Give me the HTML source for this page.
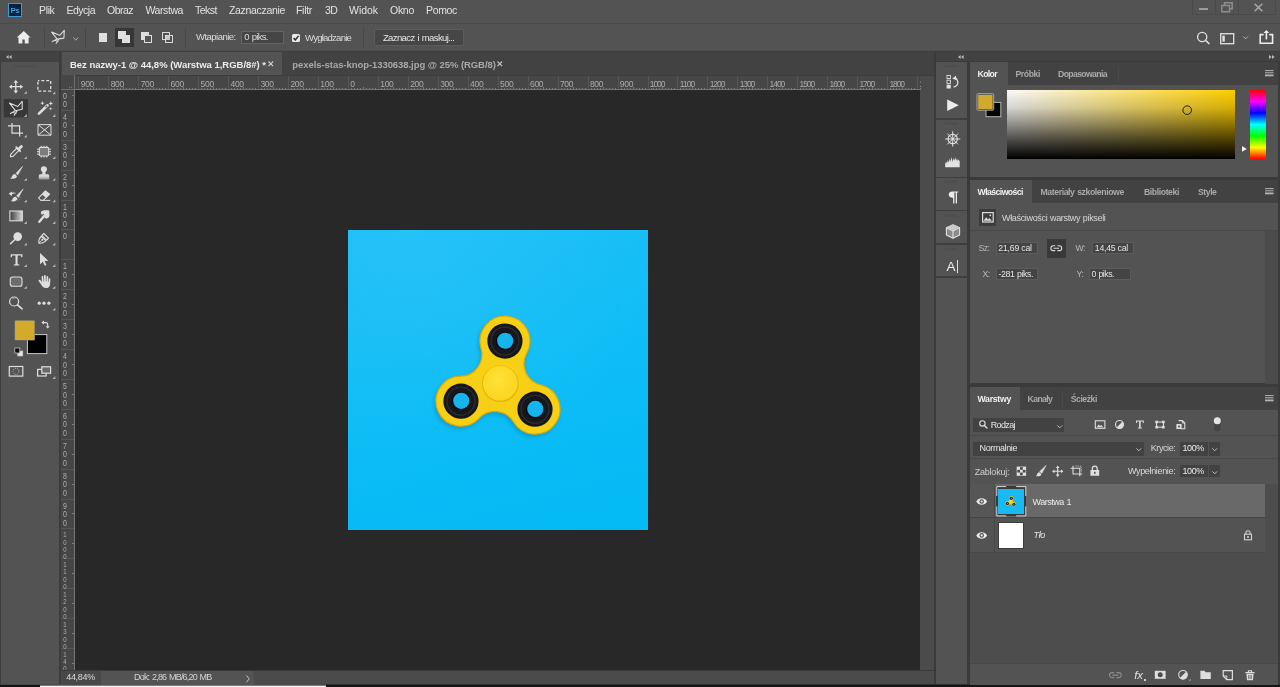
<!DOCTYPE html>
<html lang="pl">
<head>
<meta charset="utf-8">
<title>Photoshop</title>
<style>
*{box-sizing:border-box;margin:0;padding:0}
html,body{width:1280px;height:687px;overflow:hidden;background:#535353}
body{position:relative;font-family:"Liberation Sans",sans-serif;font-size:10px;color:#dadada}
.a{position:absolute}
.t{position:absolute;white-space:nowrap;color:#dcdcdc}
svg{position:absolute;overflow:visible}
</style>
</head>
<body>
<div id="app" style="position:absolute;left:0;top:0;width:1280px;height:687px;will-change:transform">
<!-- p10_layout -->
<div class="a" style="left:0px;top:0px;width:1280px;height:23px;background:#535353;"></div>
<div class="a" style="left:0px;top:23px;width:1280px;height:1px;background:#4a4a4a;"></div>
<div class="a" style="left:0px;top:24px;width:1280px;height:27px;background:#535353;"></div>
<div class="a" style="left:0px;top:50px;width:1280px;height:1px;background:#4d4d4d;"></div>
<div class="a" style="left:0px;top:51px;width:1280px;height:1px;background:#3f3f3f;"></div>
<div class="a" style="left:0px;top:52px;width:62px;height:633px;background:#3c3c3c;"></div>
<div class="a" style="left:0px;top:52px;width:59px;height:10px;background:#424242;"></div>
<div class="a" style="left:1px;top:62px;width:58px;height:623px;background:#535353;"></div>
<div class="a" style="left:61px;top:52px;width:873px;height:23.5px;background:#424242;"></div>
<div class="a" style="left:61.5px;top:52px;width:220.5px;height:23.5px;background:#535353;"></div>
<div class="a" style="left:61px;top:75px;width:859px;height:15px;background:#464646;"></div>
<div class="a" style="left:61px;top:75px;width:15px;height:595px;background:#464646;"></div>
<div class="a" style="left:62px;top:75px;width:872px;height:0.6px;background:#3c3c3c;"></div>
<div class="a" style="left:75px;top:90px;width:845px;height:580px;background:#282828;"></div>
<div class="a" style="left:920px;top:75.5px;width:14px;height:610px;background:#4b4b4b;"></div>
<div class="a" style="left:61px;top:670px;width:873px;height:15px;background:#4b4b4b;"></div>
<div class="a" style="left:62px;top:670px;width:872px;height:1px;background:#3a3a3a;"></div>
<div class="a" style="left:934px;top:52px;width:346px;height:633px;background:#3a3a3a;"></div>
<div class="a" style="left:936px;top:52px;width:344px;height:9.7px;background:#424242;"></div>
<div class="a" style="left:936px;top:61px;width:344px;height:1px;background:#3a3a3a;"></div>
<div class="a" style="left:936px;top:62px;width:31px;height:623px;background:#535353;"></div>
<div class="a" style="left:0px;top:684px;width:1280px;height:1px;background:#484848;"></div>
<div class="a" style="left:326px;top:684px;width:954px;height:1px;background:#2e2e2e;"></div>
<div class="a" style="left:0px;top:685px;width:1280px;height:2px;background:#141414;"></div>
<div class="a" style="left:40px;top:685px;width:286.3px;height:1px;background:#7d7d7d;"></div>
<div class="a" style="left:40px;top:686px;width:286.3px;height:1px;background:#f4f4f4;"></div>
<!-- p20_menubar -->
<div class="a" style="left:8px;top:3px;width:14px;height:14px;background:#06213a;border:1px solid #3b9bd2;border-radius:.5px"></div>
<div class="t" style="left:10.60px;top:6.00px;font-size:8px;line-height:10px;letter-spacing:-0.593px;font-weight:bold;color:#3a9fe6;">Ps</div>
<div class="t" style="left:39.00px;top:3.00px;font-size:10.5px;line-height:14px;letter-spacing:-0.355px;color:#e2e2e2;">Plik</div>
<div class="t" style="left:66.50px;top:3.00px;font-size:10.5px;line-height:14px;letter-spacing:-0.503px;color:#e2e2e2;">Edycja</div>
<div class="t" style="left:107.00px;top:3.00px;font-size:10.5px;line-height:14px;letter-spacing:-0.519px;color:#e2e2e2;">Obraz</div>
<div class="t" style="left:145.50px;top:3.00px;font-size:10.5px;line-height:14px;letter-spacing:-0.421px;color:#e2e2e2;">Warstwa</div>
<div class="t" style="left:195.00px;top:3.00px;font-size:10.5px;line-height:14px;letter-spacing:-0.501px;color:#e2e2e2;">Tekst</div>
<div class="t" style="left:229.00px;top:3.00px;font-size:10.5px;line-height:14px;letter-spacing:-0.321px;color:#e2e2e2;">Zaznaczanie</div>
<div class="t" style="left:296.00px;top:3.00px;font-size:10.5px;line-height:14px;letter-spacing:-0.299px;color:#e2e2e2;">Filtr</div>
<div class="t" style="left:325.00px;top:3.00px;font-size:10.5px;line-height:14px;letter-spacing:-0.711px;color:#e2e2e2;">3D</div>
<div class="t" style="left:349.00px;top:3.00px;font-size:10.5px;line-height:14px;letter-spacing:-0.035px;color:#e2e2e2;">Widok</div>
<div class="t" style="left:390.00px;top:3.00px;font-size:10.5px;line-height:14px;letter-spacing:-0.274px;color:#e2e2e2;">Okno</div>
<div class="t" style="left:426.00px;top:3.00px;font-size:10.5px;line-height:14px;letter-spacing:-0.336px;color:#e2e2e2;">Pomoc</div>
<div class="a" style="left:1192px;top:0px;width:84px;height:15px;border:1px solid #4a4a4a;border-top:none"></div>
<div class="a" style="left:1215px;top:0px;width:1px;height:15px;background:#4a4a4a;"></div>
<div class="a" style="left:1238px;top:0px;width:1px;height:15px;background:#4a4a4a;"></div>
<div class="a" style="left:1199px;top:8px;width:9px;height:2px;background:#9a9a9a;"></div>
<svg style="left:1221px;top:2px;" width="12" height="11" viewBox="0 0 12 11"><path d="M3.5 3.5V.8h7.7v5.9H8.5M.8 3.5h7.7v6.2H.8z" fill="none" stroke="#8d8d8d" stroke-width="1.5"/></svg>
<svg style="left:1254px;top:3px;" width="9" height="9" viewBox="0 0 9 9"><path d="M.7.7l7.6 7.6M8.3.7L.7 8.3" fill="none" stroke="#a8a8a8" stroke-width="1.5"/></svg>
<!-- p30_options -->
<svg style="left:16px;top:30px;" width="16" height="15" viewBox="0 0 16 15"><path d="M7.8 1L.8 7.6h1.7v5.9h3.9V9.5h2.3v4h3.9V7.6h1.9z" fill="#ececec"/></svg>
<div class="a" style="left:44px;top:28px;width:1px;height:20px;background:#474747;"></div>
<div class="a" style="left:85px;top:28px;width:1px;height:20px;background:#474747;"></div>
<div class="a" style="left:185px;top:28px;width:1px;height:20px;background:#474747;"></div>
<div class="a" style="left:363px;top:28px;width:1px;height:20px;background:#474747;"></div>
<svg style="left:49px;top:29px;" width="18" height="16" viewBox="0 0 18 16"><path d="M2.6 3.1L10.7 6.3L15.3 1.3L14.9 9.1L8.2 10.1Z M8.2 10.1L3.3 12.6 M9.6 10.8L7.2 14.3 M5.8 11.3 l3.2 1.2" fill="none" stroke="#dcdcdc" stroke-width="1.1" stroke-linejoin="round" stroke-linecap="round"/></svg>
<svg style="left:73px;top:36.7px;" width="6" height="4" viewBox="0 0 6 4"><path d="M.3.6L2.75 3L5.2.6" fill="none" stroke="#b8b8b8" stroke-width="1"/></svg>
<div class="a" style="left:98.5px;top:33px;width:8.6px;height:8.6px;background:#e0e0e0;"></div>
<div class="a" style="left:115px;top:28px;width:18.7px;height:19.4px;background:#363636;"></div>
<div class="a" style="left:118.1px;top:31px;width:8.3px;height:8.3px;background:#e0e0e0;"></div>
<div class="a" style="left:121.6px;top:34.5px;width:8.6px;height:8.6px;background:#e0e0e0;"></div>
<div class="a" style="left:140.7px;top:32px;width:8.3px;height:8.2px;background:#e0e0e0;"></div>
<div class="a" style="left:143.6px;top:35px;width:8.2px;height:8.2px;background:#555;border:1px solid #e0e0e0"></div>
<div class="a" style="left:161.8px;top:32px;width:8.4px;height:8.2px;border:1px solid #d8d8d8"></div>
<div class="a" style="left:165px;top:35px;width:8.2px;height:8.2px;border:1px solid #d8d8d8"></div>
<div class="a" style="left:165.5px;top:35.5px;width:4.4px;height:4.4px;background:#c8c8c8;"></div>
<div class="t" style="left:196.00px;top:31.00px;font-size:9.5px;line-height:12px;letter-spacing:-0.528px;">Wtapianie:</div>
<div class="a" style="left:240.5px;top:30.5px;width:43px;height:13px;background:#454545;border:1px solid #646464"></div>
<div class="t" style="left:244.30px;top:31.00px;font-size:9.5px;line-height:12px;word-spacing:0.950px;letter-spacing:-0.729px;">0 piks.</div>
<div class="a" style="left:292.3px;top:34.2px;width:8px;height:8px;background:#e8e8e8;border-radius:1.5px"></div>
<svg style="left:292.3px;top:34.2px;" width="8" height="8" viewBox="0 0 8 8"><path d="M1.6 4.1L3.4 5.9L6.5 1.9" fill="none" stroke="#2a2a2a" stroke-width="1.5"/></svg>
<div class="t" style="left:305.00px;top:32.00px;font-size:9.5px;line-height:12px;letter-spacing:-0.746px;">Wygładzanie</div>
<div class="a" style="left:373.8px;top:28.7px;width:90.6px;height:17.3px;background:#464646;border:1px solid #5c5c5c;border-radius:1px"></div>
<div class="t" style="left:382.90px;top:32.00px;font-size:9.5px;line-height:12px;word-spacing:0.825px;letter-spacing:-0.603px;color:#e6e6e6;">Zaznacz i maskuj...</div>
<svg style="left:1196px;top:31px;" width="14" height="14" viewBox="0 0 14 14"><circle cx="6.2" cy="6" r="4.6" fill="none" stroke="#e2e2e2" stroke-width="1.3"/><path d="M9.5 9.3L13 12.6" stroke="#e2e2e2" stroke-width="1.5" stroke-linecap="round"/></svg>
<svg style="left:1220px;top:32.5px;" width="14.5" height="11.5" viewBox="0 0 14.5 11.5"><rect x=".7" y=".7" width="13" height="10" fill="none" stroke="#e2e2e2" stroke-width="1.3"/><rect x="2.4" y="2.6" width="2.4" height="6" fill="#e2e2e2"/></svg>
<svg style="left:1243px;top:36.4px;" width="6" height="4" viewBox="0 0 6 4"><path d="M.3.5L2.6 2.8L4.9.5" fill="none" stroke="#b8b8b8" stroke-width="1"/></svg>
<svg style="left:1258.5px;top:29px;" width="15" height="15.5" viewBox="0 0 15 15.5"><path d="M4.6 5.6H1.2v8.6h12.4V5.6H10.2" fill="none" stroke="#ececec" stroke-width="1.6"/><path d="M7.4 10.4V2.2" stroke="#ececec" stroke-width="1.6"/><path d="M4.6 3.9L7.4.9L10.2 3.9z" fill="#ececec"/></svg>
<svg style="left:6px;top:54.5px;" width="6" height="4" viewBox="0 0 6 4"><path d="M2.6 0L0 2L2.6 4zM5.6 0L3 2L5.6 4z" fill="#bdbdbd"/></svg>
<svg style="left:958px;top:54.5px;" width="6" height="4" viewBox="0 0 6 4"><path d="M2.6 0L0 2L2.6 4zM5.6 0L3 2L5.6 4z" fill="#bdbdbd"/></svg>
<svg style="left:1268.5px;top:54.5px;" width="6" height="4" viewBox="0 0 6 4"><path d="M0 0L2.6 2L0 4zM3 0L5.6 2L3 4z" fill="#bdbdbd"/></svg>
<!-- p40_doc -->
<div class="t" style="left:70.00px;top:59.00px;font-size:9.5px;line-height:12px;letter-spacing:-0.022px;font-weight:bold;color:#ececec;">Bez nazwy-1 @ 44,8% (Warstwa 1,RGB/8#) *</div>
<svg style="left:268px;top:61px;" width="6" height="6" viewBox="0 0 6 6"><path d="M.5.5l4.6 4.6M5.1.5L.5 5.1" fill="none" stroke="#d0d0d0" stroke-width="1.1"/></svg>
<div class="t" style="left:292.30px;top:59.00px;font-size:9.5px;line-height:12px;letter-spacing:-0.064px;font-weight:bold;color:#a9a9a9;">pexels-stas-knop-1330638.jpg @ 25% (RGB/8)</div>
<svg style="left:497.3px;top:61px;" width="6" height="6" viewBox="0 0 6 6"><path d="M.5.5l4.6 4.6M5.1.5L.5 5.1" fill="none" stroke="#c4c4c4" stroke-width="1.1"/></svg>
<div class="a" style="left:75px;top:75px;width:846px;height:15px;overflow:hidden"><svg style="left:0;top:0" width="846" height="15" shape-rendering="crispEdges"><path d="M3.95 15v-14M33.90 15v-14M63.85 15v-14M93.80 15v-14M123.75 15v-14M153.70 15v-14M183.65 15v-14M213.60 15v-14M243.55 15v-14M273.50 15v-14M303.45 15v-14M333.40 15v-14M363.35 15v-14M393.30 15v-14M423.25 15v-14M453.20 15v-14M483.15 15v-14M513.10 15v-14M543.05 15v-14M573.00 15v-14M602.95 15v-14M632.90 15v-14M662.85 15v-14M692.80 15v-14M722.75 15v-14M752.70 15v-14M782.65 15v-14M812.60 15v-14M842.55 15v-14" stroke="#565656" stroke-width="1" fill="none"/><path d="M6.95 14.5v-1.4M9.94 14.5v-1.4M12.94 14.5v-1.4M15.93 14.5v-1.4M18.93 14.5v-2.6M21.92 14.5v-1.4M24.92 14.5v-1.4M27.91 14.5v-1.4M30.91 14.5v-1.4M36.90 14.5v-1.4M39.89 14.5v-1.4M42.88 14.5v-1.4M45.88 14.5v-1.4M48.88 14.5v-2.6M51.87 14.5v-1.4M54.87 14.5v-1.4M57.86 14.5v-1.4M60.86 14.5v-1.4M66.85 14.5v-1.4M69.84 14.5v-1.4M72.84 14.5v-1.4M75.83 14.5v-1.4M78.82 14.5v-2.6M81.82 14.5v-1.4M84.81 14.5v-1.4M87.81 14.5v-1.4M90.81 14.5v-1.4M96.80 14.5v-1.4M99.79 14.5v-1.4M102.79 14.5v-1.4M105.78 14.5v-1.4M108.78 14.5v-2.6M111.77 14.5v-1.4M114.77 14.5v-1.4M117.76 14.5v-1.4M120.75 14.5v-1.4M126.75 14.5v-1.4M129.74 14.5v-1.4M132.74 14.5v-1.4M135.73 14.5v-1.4M138.72 14.5v-2.6M141.72 14.5v-1.4M144.72 14.5v-1.4M147.71 14.5v-1.4M150.70 14.5v-1.4M156.69 14.5v-1.4M159.69 14.5v-1.4M162.69 14.5v-1.4M165.68 14.5v-1.4M168.68 14.5v-2.6M171.67 14.5v-1.4M174.66 14.5v-1.4M177.66 14.5v-1.4M180.66 14.5v-1.4M186.64 14.5v-1.4M189.64 14.5v-1.4M192.63 14.5v-1.4M195.63 14.5v-1.4M198.62 14.5v-2.6M201.62 14.5v-1.4M204.62 14.5v-1.4M207.61 14.5v-1.4M210.61 14.5v-1.4M216.60 14.5v-1.4M219.59 14.5v-1.4M222.58 14.5v-1.4M225.58 14.5v-1.4M228.57 14.5v-2.6M231.57 14.5v-1.4M234.56 14.5v-1.4M237.56 14.5v-1.4M240.56 14.5v-1.4M246.55 14.5v-1.4M249.54 14.5v-1.4M252.54 14.5v-1.4M255.53 14.5v-1.4M258.52 14.5v-2.6M261.52 14.5v-1.4M264.51 14.5v-1.4M267.51 14.5v-1.4M270.50 14.5v-1.4M276.50 14.5v-1.4M279.49 14.5v-1.4M282.49 14.5v-1.4M285.48 14.5v-1.4M288.48 14.5v-2.6M291.47 14.5v-1.4M294.46 14.5v-1.4M297.46 14.5v-1.4M300.45 14.5v-1.4M306.44 14.5v-1.4M309.44 14.5v-1.4M312.44 14.5v-1.4M315.43 14.5v-1.4M318.43 14.5v-2.6M321.42 14.5v-1.4M324.42 14.5v-1.4M327.41 14.5v-1.4M330.40 14.5v-1.4M336.39 14.5v-1.4M339.39 14.5v-1.4M342.38 14.5v-1.4M345.38 14.5v-1.4M348.38 14.5v-2.6M351.37 14.5v-1.4M354.37 14.5v-1.4M357.36 14.5v-1.4M360.36 14.5v-1.4M366.35 14.5v-1.4M369.34 14.5v-1.4M372.34 14.5v-1.4M375.33 14.5v-1.4M378.32 14.5v-2.6M381.32 14.5v-1.4M384.31 14.5v-1.4M387.31 14.5v-1.4M390.31 14.5v-1.4M396.30 14.5v-1.4M399.29 14.5v-1.4M402.28 14.5v-1.4M405.28 14.5v-1.4M408.27 14.5v-2.6M411.27 14.5v-1.4M414.26 14.5v-1.4M417.26 14.5v-1.4M420.25 14.5v-1.4M426.25 14.5v-1.4M429.24 14.5v-1.4M432.24 14.5v-1.4M435.23 14.5v-1.4M438.23 14.5v-2.6M441.22 14.5v-1.4M444.21 14.5v-1.4M447.21 14.5v-1.4M450.20 14.5v-1.4M456.19 14.5v-1.4M459.19 14.5v-1.4M462.18 14.5v-1.4M465.18 14.5v-1.4M468.17 14.5v-2.6M471.17 14.5v-1.4M474.16 14.5v-1.4M477.16 14.5v-1.4M480.15 14.5v-1.4M486.14 14.5v-1.4M489.14 14.5v-1.4M492.13 14.5v-1.4M495.13 14.5v-1.4M498.12 14.5v-2.6M501.12 14.5v-1.4M504.12 14.5v-1.4M507.11 14.5v-1.4M510.11 14.5v-1.4M516.10 14.5v-1.4M519.09 14.5v-1.4M522.09 14.5v-1.4M525.08 14.5v-1.4M528.08 14.5v-2.6M531.07 14.5v-1.4M534.07 14.5v-1.4M537.06 14.5v-1.4M540.05 14.5v-1.4M546.04 14.5v-1.4M549.04 14.5v-1.4M552.03 14.5v-1.4M555.03 14.5v-1.4M558.02 14.5v-2.6M561.02 14.5v-1.4M564.01 14.5v-1.4M567.01 14.5v-1.4M570.00 14.5v-1.4M576.00 14.5v-1.4M578.99 14.5v-1.4M581.99 14.5v-1.4M584.98 14.5v-1.4M587.98 14.5v-2.6M590.97 14.5v-1.4M593.97 14.5v-1.4M596.96 14.5v-1.4M599.95 14.5v-1.4M605.94 14.5v-1.4M608.94 14.5v-1.4M611.93 14.5v-1.4M614.93 14.5v-1.4M617.92 14.5v-2.6M620.92 14.5v-1.4M623.91 14.5v-1.4M626.91 14.5v-1.4M629.90 14.5v-1.4M635.89 14.5v-1.4M638.89 14.5v-1.4M641.88 14.5v-1.4M644.88 14.5v-1.4M647.88 14.5v-2.6M650.87 14.5v-1.4M653.87 14.5v-1.4M656.86 14.5v-1.4M659.86 14.5v-1.4M665.85 14.5v-1.4M668.84 14.5v-1.4M671.84 14.5v-1.4M674.83 14.5v-1.4M677.83 14.5v-2.6M680.82 14.5v-1.4M683.81 14.5v-1.4M686.81 14.5v-1.4M689.81 14.5v-1.4M695.79 14.5v-1.4M698.79 14.5v-1.4M701.78 14.5v-1.4M704.78 14.5v-1.4M707.77 14.5v-2.6M710.77 14.5v-1.4M713.76 14.5v-1.4M716.76 14.5v-1.4M719.75 14.5v-1.4M725.75 14.5v-1.4M728.74 14.5v-1.4M731.73 14.5v-1.4M734.73 14.5v-1.4M737.73 14.5v-2.6M740.72 14.5v-1.4M743.71 14.5v-1.4M746.71 14.5v-1.4M749.71 14.5v-1.4M755.69 14.5v-1.4M758.69 14.5v-1.4M761.68 14.5v-1.4M764.68 14.5v-1.4M767.67 14.5v-2.6M770.67 14.5v-1.4M773.66 14.5v-1.4M776.66 14.5v-1.4M779.65 14.5v-1.4M785.64 14.5v-1.4M788.64 14.5v-1.4M791.63 14.5v-1.4M794.63 14.5v-1.4M797.62 14.5v-2.6M800.62 14.5v-1.4M803.62 14.5v-1.4M806.61 14.5v-1.4M809.61 14.5v-1.4M815.60 14.5v-1.4M818.59 14.5v-1.4M821.58 14.5v-1.4M824.58 14.5v-1.4M827.58 14.5v-2.6M830.57 14.5v-1.4M833.56 14.5v-1.4M836.56 14.5v-1.4M839.56 14.5v-1.4M845.54 14.5v-1.4" stroke="#7a7a7a" stroke-width="1" fill="none"/><path d="M0 14.5h846" stroke="#767676" stroke-width="1"/></svg><div class="t" style="left:5.75px;top:4.00px;font-size:8.5px;line-height:11px;letter-spacing:-0.294px;color:#adadad;">900</div>
<div class="t" style="left:35.70px;top:4.00px;font-size:8.5px;line-height:11px;letter-spacing:-0.294px;color:#adadad;">800</div>
<div class="t" style="left:65.65px;top:4.00px;font-size:8.5px;line-height:11px;letter-spacing:-0.294px;color:#adadad;">700</div>
<div class="t" style="left:95.60px;top:4.00px;font-size:8.5px;line-height:11px;letter-spacing:-0.294px;color:#adadad;">600</div>
<div class="t" style="left:125.55px;top:4.00px;font-size:8.5px;line-height:11px;letter-spacing:-0.294px;color:#adadad;">500</div>
<div class="t" style="left:155.50px;top:4.00px;font-size:8.5px;line-height:11px;letter-spacing:-0.294px;color:#adadad;">400</div>
<div class="t" style="left:185.45px;top:4.00px;font-size:8.5px;line-height:11px;letter-spacing:-0.294px;color:#adadad;">300</div>
<div class="t" style="left:215.40px;top:4.00px;font-size:8.5px;line-height:11px;letter-spacing:-0.294px;color:#adadad;">200</div>
<div class="t" style="left:245.35px;top:4.00px;font-size:8.5px;line-height:11px;letter-spacing:-0.294px;color:#adadad;">100</div>
<div class="t" style="left:275.30px;top:4.00px;font-size:8.5px;line-height:11px;letter-spacing:-0.828px;color:#adadad;">0</div>
<div class="t" style="left:305.25px;top:4.00px;font-size:8.5px;line-height:11px;letter-spacing:-0.294px;color:#adadad;">100</div>
<div class="t" style="left:335.20px;top:4.00px;font-size:8.5px;line-height:11px;letter-spacing:-0.294px;color:#adadad;">200</div>
<div class="t" style="left:365.15px;top:4.00px;font-size:8.5px;line-height:11px;letter-spacing:-0.294px;color:#adadad;">300</div>
<div class="t" style="left:395.10px;top:4.00px;font-size:8.5px;line-height:11px;letter-spacing:-0.294px;color:#adadad;">400</div>
<div class="t" style="left:425.05px;top:4.00px;font-size:8.5px;line-height:11px;letter-spacing:-0.294px;color:#adadad;">500</div>
<div class="t" style="left:455.00px;top:4.00px;font-size:8.5px;line-height:11px;letter-spacing:-0.294px;color:#adadad;">600</div>
<div class="t" style="left:484.95px;top:4.00px;font-size:8.5px;line-height:11px;letter-spacing:-0.294px;color:#adadad;">700</div>
<div class="t" style="left:514.90px;top:4.00px;font-size:8.5px;line-height:11px;letter-spacing:-0.294px;color:#adadad;">800</div>
<div class="t" style="left:544.85px;top:4.00px;font-size:8.5px;line-height:11px;letter-spacing:-0.294px;color:#adadad;">900</div>
<div class="t" style="left:574.80px;top:4.00px;font-size:8.5px;line-height:11px;letter-spacing:-1.078px;color:#adadad;">1000</div>
<div class="t" style="left:604.75px;top:4.00px;font-size:8.5px;line-height:11px;letter-spacing:-0.920px;color:#adadad;">1100</div>
<div class="t" style="left:634.70px;top:4.00px;font-size:8.5px;line-height:11px;letter-spacing:-1.078px;color:#adadad;">1200</div>
<div class="t" style="left:664.65px;top:4.00px;font-size:8.5px;line-height:11px;letter-spacing:-1.078px;color:#adadad;">1300</div>
<div class="t" style="left:694.60px;top:4.00px;font-size:8.5px;line-height:11px;letter-spacing:-1.078px;color:#adadad;">1400</div>
<div class="t" style="left:724.55px;top:4.00px;font-size:8.5px;line-height:11px;letter-spacing:-1.078px;color:#adadad;">1500</div>
<div class="t" style="left:754.50px;top:4.00px;font-size:8.5px;line-height:11px;letter-spacing:-1.078px;color:#adadad;">1600</div>
<div class="t" style="left:784.45px;top:4.00px;font-size:8.5px;line-height:11px;letter-spacing:-1.078px;color:#adadad;">1700</div>
<div class="t" style="left:814.40px;top:4.00px;font-size:8.5px;line-height:11px;letter-spacing:-1.078px;color:#adadad;">1800</div>
<div class="t" style="left:844.35px;top:4.00px;font-size:8.5px;line-height:11px;letter-spacing:-1.078px;color:#adadad;">1900</div>
</div>
<div class="a" style="left:61px;top:90px;width:14px;height:580px;overflow:hidden"><svg style="left:0;top:0" width="14" height="580" shape-rendering="crispEdges"><path d="M14 20.30h-14M14 50.20h-14M14 80.10h-14M14 110.00h-14M14 139.90h-14M14 169.80h-14M14 199.70h-14M14 229.60h-14M14 259.50h-14M14 289.40h-14M14 319.30h-14M14 349.20h-14M14 379.10h-14M14 409.00h-14M14 438.90h-14M14 468.80h-14M14 498.70h-14M14 528.60h-14M14 558.50h-14" stroke="#565656" stroke-width="1" fill="none"/><path d="M14 2.36h-1.4M14 5.35h-2.6M14 8.34h-1.4M14 11.33h-1.4M14 14.32h-1.4M14 17.31h-1.4M14 23.29h-1.4M14 26.28h-1.4M14 29.27h-1.4M14 32.26h-1.4M14 35.25h-2.6M14 38.24h-1.4M14 41.23h-1.4M14 44.22h-1.4M14 47.21h-1.4M14 53.19h-1.4M14 56.18h-1.4M14 59.17h-1.4M14 62.16h-1.4M14 65.15h-2.6M14 68.14h-1.4M14 71.13h-1.4M14 74.12h-1.4M14 77.11h-1.4M14 83.09h-1.4M14 86.08h-1.4M14 89.07h-1.4M14 92.06h-1.4M14 95.05h-2.6M14 98.04h-1.4M14 101.03h-1.4M14 104.02h-1.4M14 107.01h-1.4M14 112.99h-1.4M14 115.98h-1.4M14 118.97h-1.4M14 121.96h-1.4M14 124.95h-2.6M14 127.94h-1.4M14 130.93h-1.4M14 133.92h-1.4M14 136.91h-1.4M14 142.89h-1.4M14 145.88h-1.4M14 148.87h-1.4M14 151.86h-1.4M14 154.85h-2.6M14 157.84h-1.4M14 160.83h-1.4M14 163.82h-1.4M14 166.81h-1.4M14 172.79h-1.4M14 175.78h-1.4M14 178.77h-1.4M14 181.76h-1.4M14 184.75h-2.6M14 187.74h-1.4M14 190.73h-1.4M14 193.72h-1.4M14 196.71h-1.4M14 202.69h-1.4M14 205.68h-1.4M14 208.67h-1.4M14 211.66h-1.4M14 214.65h-2.6M14 217.64h-1.4M14 220.63h-1.4M14 223.62h-1.4M14 226.61h-1.4M14 232.59h-1.4M14 235.58h-1.4M14 238.57h-1.4M14 241.56h-1.4M14 244.55h-2.6M14 247.54h-1.4M14 250.53h-1.4M14 253.52h-1.4M14 256.51h-1.4M14 262.49h-1.4M14 265.48h-1.4M14 268.47h-1.4M14 271.46h-1.4M14 274.45h-2.6M14 277.44h-1.4M14 280.43h-1.4M14 283.42h-1.4M14 286.41h-1.4M14 292.39h-1.4M14 295.38h-1.4M14 298.37h-1.4M14 301.36h-1.4M14 304.35h-2.6M14 307.34h-1.4M14 310.33h-1.4M14 313.32h-1.4M14 316.31h-1.4M14 322.29h-1.4M14 325.28h-1.4M14 328.27h-1.4M14 331.26h-1.4M14 334.25h-2.6M14 337.24h-1.4M14 340.23h-1.4M14 343.22h-1.4M14 346.21h-1.4M14 352.19h-1.4M14 355.18h-1.4M14 358.17h-1.4M14 361.16h-1.4M14 364.15h-2.6M14 367.14h-1.4M14 370.13h-1.4M14 373.12h-1.4M14 376.11h-1.4M14 382.09h-1.4M14 385.08h-1.4M14 388.07h-1.4M14 391.06h-1.4M14 394.05h-2.6M14 397.04h-1.4M14 400.03h-1.4M14 403.02h-1.4M14 406.01h-1.4M14 411.99h-1.4M14 414.98h-1.4M14 417.97h-1.4M14 420.96h-1.4M14 423.95h-2.6M14 426.94h-1.4M14 429.93h-1.4M14 432.92h-1.4M14 435.91h-1.4M14 441.89h-1.4M14 444.88h-1.4M14 447.87h-1.4M14 450.86h-1.4M14 453.85h-2.6M14 456.84h-1.4M14 459.83h-1.4M14 462.82h-1.4M14 465.81h-1.4M14 471.79h-1.4M14 474.78h-1.4M14 477.77h-1.4M14 480.76h-1.4M14 483.75h-2.6M14 486.74h-1.4M14 489.73h-1.4M14 492.72h-1.4M14 495.71h-1.4M14 501.69h-1.4M14 504.68h-1.4M14 507.67h-1.4M14 510.66h-1.4M14 513.65h-2.6M14 516.64h-1.4M14 519.63h-1.4M14 522.62h-1.4M14 525.61h-1.4M14 531.59h-1.4M14 534.58h-1.4M14 537.57h-1.4M14 540.56h-1.4M14 543.55h-2.6M14 546.54h-1.4M14 549.53h-1.4M14 552.52h-1.4M14 555.51h-1.4M14 561.49h-1.4M14 564.48h-1.4M14 567.47h-1.4M14 570.46h-1.4M14 573.45h-2.6M14 576.44h-1.4M14 579.43h-1.4" stroke="#7a7a7a" stroke-width="1" fill="none"/><path d="M13.5 0v580" stroke="#767676" stroke-width="1"/></svg><div class="t" style="left:0.60px;top:-8.00px;font-size:8.3px;line-height:11px;color:#adadad;width:6px;text-align:center;transform:scaleX(.84);">5</div>
<div class="t" style="left:0.60px;top:1.00px;font-size:8.3px;line-height:11px;color:#adadad;width:6px;text-align:center;transform:scaleX(.84);">0</div>
<div class="t" style="left:0.60px;top:9.00px;font-size:8.3px;line-height:11px;color:#adadad;width:6px;text-align:center;transform:scaleX(.84);">0</div>
<div class="t" style="left:0.60px;top:22.00px;font-size:8.3px;line-height:11px;color:#adadad;width:6px;text-align:center;transform:scaleX(.84);">4</div>
<div class="t" style="left:0.60px;top:30.00px;font-size:8.3px;line-height:11px;color:#adadad;width:6px;text-align:center;transform:scaleX(.84);">0</div>
<div class="t" style="left:0.60px;top:39.00px;font-size:8.3px;line-height:11px;color:#adadad;width:6px;text-align:center;transform:scaleX(.84);">0</div>
<div class="t" style="left:0.60px;top:52.00px;font-size:8.3px;line-height:11px;color:#adadad;width:6px;text-align:center;transform:scaleX(.84);">3</div>
<div class="t" style="left:0.60px;top:60.00px;font-size:8.3px;line-height:11px;color:#adadad;width:6px;text-align:center;transform:scaleX(.84);">0</div>
<div class="t" style="left:0.60px;top:69.00px;font-size:8.3px;line-height:11px;color:#adadad;width:6px;text-align:center;transform:scaleX(.84);">0</div>
<div class="t" style="left:0.60px;top:82.00px;font-size:8.3px;line-height:11px;color:#adadad;width:6px;text-align:center;transform:scaleX(.84);">2</div>
<div class="t" style="left:0.60px;top:90.00px;font-size:8.3px;line-height:11px;color:#adadad;width:6px;text-align:center;transform:scaleX(.84);">0</div>
<div class="t" style="left:0.60px;top:99.00px;font-size:8.3px;line-height:11px;color:#adadad;width:6px;text-align:center;transform:scaleX(.84);">0</div>
<div class="t" style="left:0.60px;top:112.00px;font-size:8.3px;line-height:11px;color:#adadad;width:6px;text-align:center;transform:scaleX(.84);">1</div>
<div class="t" style="left:0.60px;top:120.00px;font-size:8.3px;line-height:11px;color:#adadad;width:6px;text-align:center;transform:scaleX(.84);">0</div>
<div class="t" style="left:0.60px;top:129.00px;font-size:8.3px;line-height:11px;color:#adadad;width:6px;text-align:center;transform:scaleX(.84);">0</div>
<div class="t" style="left:0.60px;top:141.00px;font-size:8.3px;line-height:11px;color:#adadad;width:6px;text-align:center;transform:scaleX(.84);">0</div>
<div class="t" style="left:0.60px;top:171.00px;font-size:8.3px;line-height:11px;color:#adadad;width:6px;text-align:center;transform:scaleX(.84);">1</div>
<div class="t" style="left:0.60px;top:180.00px;font-size:8.3px;line-height:11px;color:#adadad;width:6px;text-align:center;transform:scaleX(.84);">0</div>
<div class="t" style="left:0.60px;top:189.00px;font-size:8.3px;line-height:11px;color:#adadad;width:6px;text-align:center;transform:scaleX(.84);">0</div>
<div class="t" style="left:0.60px;top:201.00px;font-size:8.3px;line-height:11px;color:#adadad;width:6px;text-align:center;transform:scaleX(.84);">2</div>
<div class="t" style="left:0.60px;top:210.00px;font-size:8.3px;line-height:11px;color:#adadad;width:6px;text-align:center;transform:scaleX(.84);">0</div>
<div class="t" style="left:0.60px;top:218.00px;font-size:8.3px;line-height:11px;color:#adadad;width:6px;text-align:center;transform:scaleX(.84);">0</div>
<div class="t" style="left:0.60px;top:231.00px;font-size:8.3px;line-height:11px;color:#adadad;width:6px;text-align:center;transform:scaleX(.84);">3</div>
<div class="t" style="left:0.60px;top:240.00px;font-size:8.3px;line-height:11px;color:#adadad;width:6px;text-align:center;transform:scaleX(.84);">0</div>
<div class="t" style="left:0.60px;top:248.00px;font-size:8.3px;line-height:11px;color:#adadad;width:6px;text-align:center;transform:scaleX(.84);">0</div>
<div class="t" style="left:0.60px;top:261.00px;font-size:8.3px;line-height:11px;color:#adadad;width:6px;text-align:center;transform:scaleX(.84);">4</div>
<div class="t" style="left:0.60px;top:270.00px;font-size:8.3px;line-height:11px;color:#adadad;width:6px;text-align:center;transform:scaleX(.84);">0</div>
<div class="t" style="left:0.60px;top:278.00px;font-size:8.3px;line-height:11px;color:#adadad;width:6px;text-align:center;transform:scaleX(.84);">0</div>
<div class="t" style="left:0.60px;top:291.00px;font-size:8.3px;line-height:11px;color:#adadad;width:6px;text-align:center;transform:scaleX(.84);">5</div>
<div class="t" style="left:0.60px;top:300.00px;font-size:8.3px;line-height:11px;color:#adadad;width:6px;text-align:center;transform:scaleX(.84);">0</div>
<div class="t" style="left:0.60px;top:308.00px;font-size:8.3px;line-height:11px;color:#adadad;width:6px;text-align:center;transform:scaleX(.84);">0</div>
<div class="t" style="left:0.60px;top:321.00px;font-size:8.3px;line-height:11px;color:#adadad;width:6px;text-align:center;transform:scaleX(.84);">6</div>
<div class="t" style="left:0.60px;top:329.00px;font-size:8.3px;line-height:11px;color:#adadad;width:6px;text-align:center;transform:scaleX(.84);">0</div>
<div class="t" style="left:0.60px;top:338.00px;font-size:8.3px;line-height:11px;color:#adadad;width:6px;text-align:center;transform:scaleX(.84);">0</div>
<div class="t" style="left:0.60px;top:351.00px;font-size:8.3px;line-height:11px;color:#adadad;width:6px;text-align:center;transform:scaleX(.84);">7</div>
<div class="t" style="left:0.60px;top:359.00px;font-size:8.3px;line-height:11px;color:#adadad;width:6px;text-align:center;transform:scaleX(.84);">0</div>
<div class="t" style="left:0.60px;top:368.00px;font-size:8.3px;line-height:11px;color:#adadad;width:6px;text-align:center;transform:scaleX(.84);">0</div>
<div class="t" style="left:0.60px;top:381.00px;font-size:8.3px;line-height:11px;color:#adadad;width:6px;text-align:center;transform:scaleX(.84);">8</div>
<div class="t" style="left:0.60px;top:389.00px;font-size:8.3px;line-height:11px;color:#adadad;width:6px;text-align:center;transform:scaleX(.84);">0</div>
<div class="t" style="left:0.60px;top:398.00px;font-size:8.3px;line-height:11px;color:#adadad;width:6px;text-align:center;transform:scaleX(.84);">0</div>
<div class="t" style="left:0.60px;top:411.00px;font-size:8.3px;line-height:11px;color:#adadad;width:6px;text-align:center;transform:scaleX(.84);">9</div>
<div class="t" style="left:0.60px;top:419.00px;font-size:8.3px;line-height:11px;color:#adadad;width:6px;text-align:center;transform:scaleX(.84);">0</div>
<div class="t" style="left:0.60px;top:428.00px;font-size:8.3px;line-height:11px;color:#adadad;width:6px;text-align:center;transform:scaleX(.84);">0</div>
<div class="t" style="left:0.60px;top:440.00px;font-size:7.2px;line-height:9px;color:#adadad;width:6px;text-align:center;transform:scaleX(.84);">1</div>
<div class="t" style="left:0.60px;top:448.00px;font-size:7.2px;line-height:9px;color:#adadad;width:6px;text-align:center;transform:scaleX(.84);">0</div>
<div class="t" style="left:0.60px;top:455.00px;font-size:7.2px;line-height:9px;color:#adadad;width:6px;text-align:center;transform:scaleX(.84);">0</div>
<div class="t" style="left:0.60px;top:462.00px;font-size:7.2px;line-height:9px;color:#adadad;width:6px;text-align:center;transform:scaleX(.84);">0</div>
<div class="t" style="left:0.60px;top:470.00px;font-size:7.2px;line-height:9px;color:#adadad;width:6px;text-align:center;transform:scaleX(.84);">1</div>
<div class="t" style="left:0.60px;top:477.00px;font-size:7.2px;line-height:9px;color:#adadad;width:6px;text-align:center;transform:scaleX(.84);">1</div>
<div class="t" style="left:0.60px;top:485.00px;font-size:7.2px;line-height:9px;color:#adadad;width:6px;text-align:center;transform:scaleX(.84);">0</div>
<div class="t" style="left:0.60px;top:492.00px;font-size:7.2px;line-height:9px;color:#adadad;width:6px;text-align:center;transform:scaleX(.84);">0</div>
<div class="t" style="left:0.60px;top:500.00px;font-size:7.2px;line-height:9px;color:#adadad;width:6px;text-align:center;transform:scaleX(.84);">1</div>
<div class="t" style="left:0.60px;top:507.00px;font-size:7.2px;line-height:9px;color:#adadad;width:6px;text-align:center;transform:scaleX(.84);">2</div>
<div class="t" style="left:0.60px;top:515.00px;font-size:7.2px;line-height:9px;color:#adadad;width:6px;text-align:center;transform:scaleX(.84);">0</div>
<div class="t" style="left:0.60px;top:522.00px;font-size:7.2px;line-height:9px;color:#adadad;width:6px;text-align:center;transform:scaleX(.84);">0</div>
<div class="t" style="left:0.60px;top:530.00px;font-size:7.2px;line-height:9px;color:#adadad;width:6px;text-align:center;transform:scaleX(.84);">1</div>
<div class="t" style="left:0.60px;top:537.00px;font-size:7.2px;line-height:9px;color:#adadad;width:6px;text-align:center;transform:scaleX(.84);">3</div>
<div class="t" style="left:0.60px;top:545.00px;font-size:7.2px;line-height:9px;color:#adadad;width:6px;text-align:center;transform:scaleX(.84);">0</div>
<div class="t" style="left:0.60px;top:552.00px;font-size:7.2px;line-height:9px;color:#adadad;width:6px;text-align:center;transform:scaleX(.84);">0</div>
<div class="t" style="left:0.60px;top:560.00px;font-size:7.2px;line-height:9px;color:#adadad;width:6px;text-align:center;transform:scaleX(.84);">1</div>
<div class="t" style="left:0.60px;top:567.00px;font-size:7.2px;line-height:9px;color:#adadad;width:6px;text-align:center;transform:scaleX(.84);">4</div>
<div class="t" style="left:0.60px;top:574.00px;font-size:7.2px;line-height:9px;color:#adadad;width:6px;text-align:center;transform:scaleX(.84);">0</div>
<div class="t" style="left:0.60px;top:582.00px;font-size:7.2px;line-height:9px;color:#adadad;width:6px;text-align:center;transform:scaleX(.84);">0</div>
</div>
<div class="a" style="left:61px;top:75px;width:14px;height:15px;background:#464646;"></div>
<svg style="left:61px;top:75px;" width="14" height="15" viewBox="0 0 14 15"><path d="M0 14.5h14M13.5 0v15" stroke="#6e6e6e" stroke-width="1" fill="none" shape-rendering="crispEdges"/><path d="M8.200 12.200h.9M10.200 12.200h.9" stroke="#9a9a9a" stroke-width=".9"/></svg>
<div class="a" style="left:62px;top:671px;width:39px;height:14px;background:#484848;"></div>
<div class="a" style="left:101px;top:671px;width:153px;height:14px;background:#535353;"></div>
<div class="t" style="left:66.20px;top:671.00px;font-size:9px;line-height:12px;letter-spacing:-0.288px;color:#dddddd;">44,84%</div>
<div class="t" style="left:134.00px;top:671.00px;font-size:9px;line-height:12px;word-spacing:1.044px;letter-spacing:-0.809px;color:#d4d4d4;">Dok: 2,86 MB/6,20 MB</div>
<svg style="left:246px;top:675px;" width="4" height="8" viewBox="0 0 4 8"><path d="M.5.5L3.2 3.8L.5 7.2" fill="none" stroke="#c4c4c4" stroke-width="1"/></svg>
<!-- p45_canvas -->
<div class="a" style="left:347.7px;top:229.8px;width:300.2px;height:300.5px;background:radial-gradient(ellipse 75% 65% at 25% 12%,rgba(56,198,248,.3) 0%,rgba(64,200,248,0) 100%),linear-gradient(165deg,#1fbff7 0%,#10bdf6 45%,#03baf5 100%);"></div>
<svg style="left:347.7px;top:229.8px;" width="300.2" height="300.5" viewBox="347.7 229.8 300.2 300.5"><defs><radialGradient id="sh" cx=".45" cy=".4" r=".7"><stop offset="0" stop-color="#ffe135"/><stop offset=".8" stop-color="#fbd622"/><stop offset="1" stop-color="#e9bd0c"/></radialGradient><filter id="sf" x="-20%" y="-20%" width="140%" height="140%"><feGaussianBlur stdDeviation="2.2"/></filter></defs><path d="M480.70 348.03A25 25 0 1 1 526.49 353.00A21.7 21.7 0 0 0 540.46 384.67A25 25 0 1 1 513.25 421.84A21.7 21.7 0 0 0 478.85 418.10A25 25 0 1 1 460.26 375.96A21.7 21.7 0 0 0 480.70 348.03Z" fill="#0a6fa0" opacity=".45" filter="url(#sf)" transform="translate(-1.5 2.5)"/><path d="M480.70 348.03A25 25 0 1 1 526.49 353.00A21.7 21.7 0 0 0 540.46 384.67A25 25 0 1 1 513.25 421.84A21.7 21.7 0 0 0 478.85 418.10A25 25 0 1 1 460.26 375.96A21.7 21.7 0 0 0 480.70 348.03Z" fill="#f7cf14" stroke="#d9a90a" stroke-width="1.2"/><circle cx="504.64" cy="340.85" r="17.6" fill="#17161b"/><circle cx="504.64" cy="340.85" r="14" fill="none" stroke="#2b2a30" stroke-width="1.5"/><circle cx="504.64" cy="340.85" r="9.2" fill="#0b0b0e"/><circle cx="504.94" cy="340.55" r="8.1" fill="#16b4ec"/><circle cx="534.70" cy="409.00" r="17.6" fill="#17161b"/><circle cx="534.70" cy="409.00" r="14" fill="none" stroke="#2b2a30" stroke-width="1.5"/><circle cx="534.70" cy="409.00" r="9.2" fill="#0b0b0e"/><circle cx="535.00" cy="408.70" r="8.1" fill="#16b4ec"/><circle cx="460.66" cy="400.95" r="17.6" fill="#17161b"/><circle cx="460.66" cy="400.95" r="14" fill="none" stroke="#2b2a30" stroke-width="1.5"/><circle cx="460.66" cy="400.95" r="9.2" fill="#0b0b0e"/><circle cx="460.96" cy="400.65" r="8.1" fill="#16b4ec"/><circle cx="500.0" cy="383.6" r="18.3" fill="#e3b408"/><circle cx="500.0" cy="383.20000000000005" r="17.4" fill="url(#sh)"/></svg>
<!-- p50_tools -->
<svg style="left:0;top:0" width="62" height="400" viewBox="0 0 62 400"><path d="M14 66h22" stroke="#4a4a4a" stroke-width="2.600" stroke-dasharray="1 1.2"/><path d="M15.8 81v11.6M10 86.7h12.4" stroke="#dedede" stroke-width="1.3" fill="none"/><path d="M15.8 79.9l2.3 2.9h-4.6zM15.8 93.5l2.3-2.9h-4.6zM9 86.7l2.9-2.3v4.6zM23 86.7l-2.9-2.3v4.6z" fill="#dedede"/><path d="M26.8 90.9v2.800h-2.800z" fill="#b9b9b9"/><rect x="37.9" y="80.6" width="12.8" height="10.6" fill="none" stroke="#dedede" stroke-width="1.3" stroke-dasharray="3 1.9" stroke-dashoffset="1.5"/><path d="M55.3 91.5v2.800h-2.800z" fill="#b9b9b9"/><rect x="3.8" y="99" width="24.2" height="18.4" fill="#383838"/><path d="M9.5 103.1L17.7 106.5L22.2 101.3L22.2 109.3L15.4 110.7Z M15.4 110.7L10.4 113.4 M16.9 111.2L14.2 115.3 M12.6 112.2l3.5 1.2" fill="none" stroke="#dedede" stroke-width="1.1" stroke-linejoin="round" stroke-linecap="round"/><path d="M26.8 114.10000000000001v2.800h-2.800z" fill="#b9b9b9"/><path d="M38.9 113.6L47.6 105.3" stroke="#dedede" stroke-width="2.6" stroke-linecap="round"/><path d="M45.6 107.2l1.6-1.5" stroke="#666" stroke-width="1.2"/><path d="M42.4 101.10000000000001L42.988 102.61200000000001L44.5 103.2L42.988 103.788L42.4 105.3L41.812 103.788L40.3 103.2L41.812 102.61200000000001Z" fill="#dedede"/><path d="M50.8 101.10000000000001L51.443999999999996 102.756L53.099999999999994 103.4L51.443999999999996 104.04400000000001L50.8 105.7L50.156 104.04400000000001L48.5 103.4L50.156 102.756Z" fill="#dedede"/><path d="M50.6 107.2L51.048 108.352L52.2 108.8L51.048 109.24799999999999L50.6 110.39999999999999L50.152 109.24799999999999L49.0 108.8L50.152 108.352Z" fill="#dedede"/><path d="M55.3 114.10000000000001v2.800h-2.800z" fill="#b9b9b9"/><path d="M12 123v10.2h11M8 125.8h11.6v10.8" fill="none" stroke="#dedede" stroke-width="1.200"/><path d="M26.8 134.7v2.800h-2.800z" fill="#b9b9b9"/><path d="M38 124.6h13v10.6h-13zM38 124.6l13 10.6M51 124.6l-13 10.6" fill="none" stroke="#dedede" stroke-width="1"/><path d="M10.4 156.6L10.8 154.2L17 148L19.2 150.2L13 156.4Z" fill="none" stroke="#dedede" stroke-width="1.1" stroke-linejoin="round"/><path d="M16.2 147.2l4 4" stroke="#dedede" stroke-width="1.8" stroke-linecap="round"/><path d="M18.6 149.2L21.4 146.4" stroke="#dedede" stroke-width="2.8" stroke-linecap="round"/><path d="M26.8 156.2v2.800h-2.800z" fill="#b9b9b9"/><rect x="39.3" y="147.4" width="9.4" height="8.6" rx="1.6" fill="#7d7d7d" stroke="#dedede" stroke-width="1.1"/><path d="M41.2 145.8v1.6M44 145.8v1.6M46.8 145.8v1.6M41.2 156v1.6M44 156v1.6M46.8 156v1.6M37 149.2h2.3M37 151.7h2.3M37 154.2h2.3M48.7 149.2h2.3M48.7 151.7h2.3M48.7 154.2h2.3" stroke="#dedede" stroke-width="1"/><path d="M55.3 156.2v2.800h-2.800z" fill="#b9b9b9"/><g transform="translate(0 0)"><path d="M22.600 166.300L16 173.200L17.800 175Z" fill="#dedede" stroke="#dedede" stroke-width=".5" stroke-linejoin="round"/><path d="M15.100 174.100L16.900 175.900C17 177.400 15.700 178.300 14.200 178.600C12.800 178.900 11.400 178.800 10.200 178.500C11.500 177.900 11.600 176.900 12.200 175.900C12.800 174.800 13.900 174 15.100 174.100Z" fill="#dedede"/></g><path d="M26.8 177.89999999999998v2.800h-2.800z" fill="#b9b9b9"/><circle cx="43.9" cy="169.2" r="3" fill="#dedede"/><path d="M42.6 171h2.6l.5 3.6h-3.600z" fill="#dedede"/><defs><linearGradient id="stg" x1="0" y1="0" x2="0" y2="1"><stop offset="0" stop-color="#e6e6e6"/><stop offset=".45" stop-color="#d0d0d0"/><stop offset="1" stop-color="#8a8a8a"/></linearGradient></defs><path d="M38.800 175.800c0-1 .8-1.600 1.800-1.600h6.800c1 0 1.800.6 1.800 1.600v3.800h-10.400z" fill="url(#stg)"/><path d="M55.3 177.89999999999998v2.800h-2.800z" fill="#b9b9b9"/><g transform="translate(0.6 22.6)"><path d="M22.600 166.300L16 173.200L17.800 175Z" fill="#dedede" stroke="#dedede" stroke-width=".5" stroke-linejoin="round"/><path d="M15.100 174.100L16.900 175.900C17 177.400 15.700 178.300 14.200 178.600C12.800 178.900 11.400 178.800 10.200 178.500C11.500 177.900 11.600 176.900 12.200 175.900C12.800 174.800 13.900 174 15.100 174.100Z" fill="#dedede"/></g><path d="M8.600 193.800l3.400-2.400v1.500c1.600-.5 3.100-.4 4.300.3c-1.500-.1-2.900.3-4.300 1v1.700z" fill="#dedede"/><path d="M19.8 196.500c.8 1.600.2 3.300-1.300 4.500" stroke="#9a9a9a" stroke-width=".8" fill="none" stroke-dasharray="1.200 1"/><path d="M26.8 199.5v2.800h-2.800z" fill="#b9b9b9"/><path d="M38.600 197.800L45.400 190.900L49.600 194.200L43.200 200.300H40.800Z" fill="none" stroke="#dedede" stroke-width="1.1" stroke-linejoin="round"/><path d="M41.900 194.500L45.400 190.900L49.600 194.200L45.900 197.700Z" fill="#dedede"/><path d="M40.800 200.400h9.400" stroke="#dedede" stroke-width="1"/><path d="M55.3 199.5v2.800h-2.800z" fill="#b9b9b9"/><defs><linearGradient id="grd" x1="0" y1="0" x2="1" y2="0"><stop offset="0" stop-color="#3a3a3a"/><stop offset="1" stop-color="#d8d8d8"/></linearGradient></defs><rect x="9.900" y="211" width="12.400" height="9.800" fill="url(#grd)" stroke="#dedede" stroke-width="1.100"/><path d="M26.8 221.1v2.800h-2.800z" fill="#b9b9b9"/><path d="M39.300 221.800L44.800 215.300" stroke="#dedede" stroke-width="2.400" stroke-linecap="round"/><path d="M41.200 211.400c1.600-1.200 5.200-1.600 8-.8l.3 5.200c-.3 1.800-2.100 3.100-3.900 2.600l-1.300-1.300l1.400-1.700l-2-1.700l-1.700 1.100c-.9-.9-1.400-2.400-.8-3.400z" fill="#dedede"/><path d="M55.3 221.1v2.800h-2.800z" fill="#b9b9b9"/><circle cx="17.700" cy="236.600" r="4.300" fill="#dedede"/><path d="M14.600 239.700L10.500 243.800" stroke="#dedede" stroke-width="1.500" stroke-linecap="round"/><path d="M26.8 242.7v2.800h-2.800z" fill="#b9b9b9"/><path d="M38.9 243.1Q42.4 243.8 45.8 240.8L41.2 236.2Q38.2 239.600 38.9 243.1Z" fill="none" stroke="#dedede" stroke-width="1.100" stroke-linejoin="round"/><path d="M39.1 242.900l2.600-2.600" stroke="#dedede" stroke-width=".9"/><circle cx="42.300" cy="239.700" r="1" fill="#dedede"/><path d="M46.600 240.1L41.900 235.400L43.800 233.500L48.500 238.200Z" fill="none" stroke="#dedede" stroke-width="1.100" stroke-linejoin="round"/><path d="M55.3 242.7v2.800h-2.800z" fill="#b9b9b9"/><path d="M10.700 254.200h11.700v3h-1l-.5-1.800h-3.300v8.800l1.700.4v.9h-5.500v-.9l1.700-.4v-8.800h-3.300l-.5 1.800h-1z" fill="#dedede"/><path d="M26.8 264.3v2.800h-2.800z" fill="#b9b9b9"/><path d="M40 253v11.300l2.900-2.500l1.800 4l1.700-.8l-1.800-3.900l3.700-.3z" fill="#dedede"/><path d="M55.3 264.3v2.800h-2.800z" fill="#b9b9b9"/><rect x="10.300" y="277" width="11.700" height="9.300" rx="2.300" fill="#6c6c6c" stroke="#dedede" stroke-width="1.100"/><path d="M26.8 286.0v2.800h-2.800z" fill="#b9b9b9"/><path d="M41.500 281.200c-.6-.8-1.700-1.900-2.600-1.400c-.8.500-.2 1.400.4 2.200l2.800 4.100c.9 1.300 2 2 3.700 2c2.700 0 4.200-1.700 4.300-4.200l.2-4.700c0-.6-.3-1-.8-1s-.8.400-.8 1l-.1 2.600h-.5l.1-4.800c0-.6-.3-1-.8-1s-.9.400-.9 1l-.1 4.600h-.5l-.2-5.500c0-.6-.4-1-.9-1s-.8.400-.8 1l.1 5.500h-.5l-.3-4.500c0-.6-.4-1-.9-1s-.8.400-.8 1l.4 6.800z" fill="#dedede"/><path d="M55.3 286.0v2.800h-2.800z" fill="#b9b9b9"/><circle cx="14.100" cy="301.500" r="4.500" fill="none" stroke="#dedede" stroke-width="1.200"/><path d="M12 299.600c.8-1 2.200-1.500 3.500-1.100" stroke="#9a9a9a" stroke-width=".8" fill="none"/><path d="M17.500 304.900L22 308.900" stroke="#dedede" stroke-width="1.700" stroke-linecap="round"/><circle cx="39.200" cy="303.200" r="1.600" fill="#dedede"/><circle cx="44" cy="303.200" r="1.600" fill="#dedede"/><circle cx="48.900" cy="303.200" r="1.600" fill="#dedede"/><path d="M55.3 307.7v2.800h-2.800z" fill="#b9b9b9"/><rect x="27.400" y="334.600" width="19.400" height="19" fill="#000" stroke="#c9c9c9" stroke-width="1"/><rect x="14.500" y="320.200" width="20.400" height="20.400" rx="1" fill="#7a7a7a"/><rect x="15.100" y="320.800" width="19.300" height="19.300" rx=".6" fill="#d3aa2c"/><path d="M43.700 322.600h2.200c1.200 0 1.800.6 1.800 1.800v2" fill="none" stroke="#dedede" stroke-width="1.100"/><path d="M41.400 322.600l2.500-2v4zM47.700 328.600l-2-2.400h4z" fill="#dedede"/><rect x="17.800" y="351" width="5" height="5" fill="#e6e6e6" stroke="#c0c0c0" stroke-width=".6"/><rect x="14.800" y="348" width="5" height="5" fill="#0a0a0a" stroke="#c0c0c0" stroke-width=".8"/><rect x="9.300" y="366.500" width="13.500" height="9.600" fill="none" stroke="#dedede" stroke-width="1.200"/><circle cx="16" cy="371.300" r="3" fill="none" stroke="#bdbdbd" stroke-width=".9" stroke-dasharray="1.100 1"/><rect x="37.600" y="369.400" width="8.600" height="6.600" fill="none" stroke="#dedede" stroke-width="1.200"/><rect x="41.800" y="366.800" width="8.800" height="6.400" fill="#6a6a6a" stroke="#dedede" stroke-width="1.200"/><path d="M55.3 376.2v2.800h-2.800z" fill="#b9b9b9"/></svg>
<!-- p60_dock -->
<div class="a" style="left:936px;top:118px;width:31px;height:1.6px;background:#3e3e3e;"></div>
<div class="a" style="left:936px;top:176.5px;width:31px;height:1.6px;background:#3e3e3e;"></div>
<div class="a" style="left:936px;top:209.8px;width:31px;height:1.6px;background:#3e3e3e;"></div>
<div class="a" style="left:936px;top:243px;width:31px;height:1.6px;background:#3e3e3e;"></div>
<div class="a" style="left:936px;top:276px;width:31px;height:1.6px;background:#3e3e3e;"></div>
<svg style="left:0;top:0" width="1280" height="300" viewBox="0 0 1280 300"><path d="M945 66h13" stroke="#494949" stroke-width="2.6" stroke-dasharray="1 1.2"/><path d="M945 123.6h13" stroke="#494949" stroke-width="2.6" stroke-dasharray="1 1.2"/><path d="M945 181.7h13" stroke="#494949" stroke-width="2.6" stroke-dasharray="1 1.2"/><path d="M945 215.8h13" stroke="#494949" stroke-width="2.6" stroke-dasharray="1 1.2"/><path d="M945 249h13" stroke="#494949" stroke-width="2.6" stroke-dasharray="1 1.2"/><rect x="947" y="75.400" width="3.400" height="3.200" fill="none" stroke="#e2e2e2" stroke-width=".9"/><rect x="947" y="80.200" width="3.400" height="3.200" fill="none" stroke="#e2e2e2" stroke-width=".9"/><rect x="946.600" y="84.700" width="4.200" height="3.800" fill="#e2e2e2"/><path d="M953.600 87.200c3.400-.8 4.800-3.300 4.100-5.900c-.5-1.800-1.500-3-2.900-3.600" fill="none" stroke="#e2e2e2" stroke-width="1.300"/><path d="M952.200 78.600l3.800-2.800l.4 4.400z" fill="#e2e2e2"/><path d="M947.200 99.600l11.600 5.700l-11.600 5.700z" fill="#ececec"/><circle cx="952.700" cy="139" r="4.600" fill="none" stroke="#e2e2e2" stroke-width="1.200"/><circle cx="952.700" cy="139" r="1.500" fill="#e2e2e2"/><path d="M954.20 139.00L960.30 139.00M953.76 140.06L958.07 144.37M952.70 140.50L952.70 146.60M951.64 140.06L947.33 144.37M951.20 139.00L945.10 139.00M951.64 137.94L947.33 133.63M952.70 137.50L952.70 131.40M953.76 137.94L958.07 133.63" stroke="#e2e2e2" stroke-width="1" fill="none"/><path d="M945.200 167.200v-3.600l.9-1.600l.8 1.200l.9-3l.9 2.200l.9-4l1 3.400l.9-5l1 5.200l.9-3.800l.9 2.600l.9-3.600l.9 3.400l.9-2.200l.9 2.600l.9-1.400l.9 2v5.600z" fill="#e2e2e2"/><path d="M952.400 191.400h5.800v1.200h-1.200v10.900h-1.300v-10.900h-1.300v10.900h-1.300v-5.600c-2.600 0-4.400-1.300-4.400-3.300c0-2 1.700-3.200 3.700-3.200z" fill="#ececec"/><path d="M953 224.700l6.600 3v7.200l-6.600 3.400l-6.600-3.400v-7.200z" fill="#8a8a8a" stroke="#e2e2e2" stroke-width="1.100" stroke-linejoin="round"/><path d="M946.400 227.700l6.600 3.100l6.600-3.100M953 230.800v7.500" fill="none" stroke="#e2e2e2" stroke-width="1.100"/><path d="M953 224.700l6.600 3l-6.600 3.100l-6.600-3.100z" fill="#c9c9c9"/></svg>
<div class="t" style="left:946.60px;top:258.00px;font-size:13.5px;line-height:18px;color:#ececec;">A</div>
<div class="a" style="left:957.2px;top:259.6px;width:1.2px;height:13px;background:#e0e0e0;"></div>
<!-- p70_panels -->
<div class="a" style="left:969.7px;top:61.75px;width:308.29999999999995px;height:114.75px;background:#535353;"></div>
<div class="a" style="left:969.7px;top:61.75px;width:308.29999999999995px;height:23.3px;background:#424242;"></div>
<div class="a" style="left:969.7px;top:61.75px;width:38px;height:23.5px;background:#535353;"></div>
<div class="t" style="left:977.50px;top:69.00px;font-size:8.7px;line-height:11px;letter-spacing:-0.642px;font-weight:bold;color:#f0f0f0;">Kolor</div>
<div class="t" style="left:1015.50px;top:69.00px;font-size:8.7px;line-height:11px;letter-spacing:-0.428px;font-weight:bold;color:#a9a9a9;">Próbki</div>
<div class="t" style="left:1058.00px;top:69.00px;font-size:8.7px;line-height:11px;letter-spacing:-0.643px;font-weight:bold;color:#a9a9a9;">Dopasowania</div>
<svg style="left:1265px;top:70.05px;" width="9" height="7" viewBox="0 0 9 7"><path d="M0 .6h8.600M0 2.800h8.600" stroke="#b4b4b4" stroke-width="1"/><path d="M0 5.400h8.600" stroke="#b4b4b4" stroke-width="1.800"/></svg>
<div class="a" style="left:1118px;top:66px;width:1px;height:16px;background:#4a4a4a;"></div>
<svg style="left:970px;top:88px;" width="40" height="34" viewBox="970 88 40 34"><rect x="986" y="102.400" width="14.800" height="14.300" fill="#040404" stroke="#b4b4b4" stroke-width="1"/><rect x="977" y="93.700" width="16.700" height="16.500" rx=".8" fill="#4a4a4a" stroke="#a8a8a8" stroke-width="1"/><rect x="978.200" y="94.900" width="14.300" height="14.100" fill="#d1aa2d"/></svg>
<div class="a" style="left:1006.7px;top:90px;width:228.8px;height:69.2px;background:linear-gradient(to bottom,rgba(0,0,0,0) 0%,rgba(0,0,0,.15) 25%,rgba(0,0,0,.43) 50%,rgba(0,0,0,.73) 75%,#000 100%),linear-gradient(to right,#fbfbfb 0%,#fdcd00 100%);"></div>
<svg style="left:1181.5px;top:104.7px;" width="10.4" height="10.4" viewBox="0 0 10.4 10.4"><circle cx="5.200" cy="5.200" r="4.300" fill="none" stroke="#1c1c1c" stroke-width="1"/></svg>
<div class="a" style="left:1249.5px;top:90px;width:16.5px;height:69.2px;background:linear-gradient(to bottom,#ff0000 0%,#ff00ff 16.600%,#0000ff 33.300%,#00ffff 50%,#00ff00 66.600%,#ffff00 83.300%,#ff0000 100%);"></div>
<svg style="left:1242px;top:146.2px;" width="5" height="6" viewBox="0 0 5 6"><path d="M0 0L4.800 2.900L0 5.800z" fill="#f4f4f4"/></svg>
<div class="a" style="left:969.7px;top:179.6px;width:308.29999999999995px;height:203.9px;background:#535353;"></div>
<div class="a" style="left:969.7px;top:179.6px;width:308.29999999999995px;height:23.3px;background:#424242;"></div>
<div class="a" style="left:969.7px;top:179.6px;width:62.5px;height:23.5px;background:#535353;"></div>
<div class="t" style="left:977.50px;top:187.00px;font-size:8.7px;line-height:11px;letter-spacing:-0.566px;font-weight:bold;color:#f0f0f0;">Właściwości</div>
<div class="t" style="left:1040.50px;top:187.00px;font-size:8.7px;line-height:11px;word-spacing:0.600px;letter-spacing:-0.403px;font-weight:bold;color:#a9a9a9;">Materiały szkoleniowe</div>
<div class="t" style="left:1144.00px;top:187.00px;font-size:8.7px;line-height:11px;letter-spacing:-0.415px;font-weight:bold;color:#a9a9a9;">Biblioteki</div>
<div class="t" style="left:1198.00px;top:187.00px;font-size:8.7px;line-height:11px;letter-spacing:-0.458px;font-weight:bold;color:#a9a9a9;">Style</div>
<svg style="left:1265px;top:187.9px;" width="9" height="7" viewBox="0 0 9 7"><path d="M0 .6h8.600M0 2.800h8.600" stroke="#b4b4b4" stroke-width="1"/><path d="M0 5.400h8.600" stroke="#b4b4b4" stroke-width="1.800"/></svg>
<div class="a" style="left:969.7px;top:229.5px;width:308.29999999999995px;height:1px;background:#484848;"></div>
<div class="a" style="left:1265px;top:230.5px;width:13px;height:153px;background:#4b4b4b;"></div>
<div class="a" style="left:979px;top:209px;width:17.3px;height:16.6px;background:#3c3c3c;"></div>
<svg style="left:981.8px;top:212px;" width="12" height="11" viewBox="0 0 12 11"><rect x=".6" y=".6" width="10.600" height="9.400" fill="none" stroke="#dedede" stroke-width="1.200"/><path d="M1.600 8.800l2.600-3.600l1.800 2.200l1.300-1.400l2.600 2.800z" fill="#dedede"/><circle cx="8.300" cy="3.300" r=".9" fill="#dedede"/></svg>
<div class="t" style="left:1002.00px;top:212.00px;font-size:9px;line-height:12px;word-spacing:0.476px;letter-spacing:-0.332px;color:#d6d6d6;">Właściwości warstwy pikseli</div>
<div class="t" style="left:978.60px;top:243.00px;font-size:8.7px;line-height:11px;letter-spacing:-0.623px;color:#b9b9b9;">Sz:</div>
<div class="a" style="left:995.5px;top:242px;width:42.5px;height:12px;background:#444444;border:1px solid #5c5c5c"></div>
<div class="t" style="left:998.30px;top:243.00px;font-size:8.7px;line-height:11px;letter-spacing:-0.201px;color:#e4e4e4;">21,69 cal</div>
<div class="a" style="left:1047px;top:239px;width:18.9px;height:19.3px;background:#393939;"></div>
<svg style="left:1049.7px;top:245px;" width="13" height="7" viewBox="0 0 13 7"><path d="M5.200.8H3.300a2.400 2.400 0 000 4.800h1.900M7.400.8h1.900a2.400 2.400 0 010 4.800H7.400M3.600 3.200h5.400" fill="none" stroke="#dcdcdc" stroke-width="1.100"/></svg>
<div class="t" style="left:1075.60px;top:243.00px;font-size:8.7px;line-height:11px;letter-spacing:-0.585px;color:#b9b9b9;">W:</div>
<div class="a" style="left:1091.5px;top:242px;width:42.3px;height:12px;background:#444444;border:1px solid #5c5c5c"></div>
<div class="t" style="left:1094.80px;top:243.00px;font-size:8.7px;line-height:11px;letter-spacing:-0.234px;color:#e4e4e4;">14,45 cal</div>
<div class="t" style="left:982.60px;top:269.00px;font-size:8.7px;line-height:11px;letter-spacing:-0.660px;color:#b9b9b9;">X:</div>
<div class="a" style="left:995.5px;top:268px;width:42.5px;height:12px;background:#444444;border:1px solid #5c5c5c"></div>
<div class="t" style="left:998.60px;top:269.00px;font-size:8.7px;line-height:11px;word-spacing:0.530px;letter-spacing:-0.384px;color:#e4e4e4;">-281 piks.</div>
<div class="t" style="left:1076.50px;top:269.00px;font-size:8.7px;line-height:11px;letter-spacing:-0.370px;color:#b9b9b9;">Y:</div>
<div class="a" style="left:1088.9px;top:268px;width:41.8px;height:12px;background:#444444;border:1px solid #5c5c5c"></div>
<div class="t" style="left:1091.50px;top:269.00px;font-size:8.7px;line-height:11px;word-spacing:0.604px;letter-spacing:-0.464px;color:#e4e4e4;">0 piks.</div>
<!-- p80_layers -->
<div class="a" style="left:969.7px;top:386.5px;width:308.29999999999995px;height:298.5px;background:#535353;"></div>
<div class="a" style="left:969.7px;top:386.5px;width:308.29999999999995px;height:23.3px;background:#424242;"></div>
<div class="a" style="left:969.7px;top:386.5px;width:50.2px;height:23.5px;background:#535353;"></div>
<div class="t" style="left:977.50px;top:394.00px;font-size:8.7px;line-height:11px;letter-spacing:-0.279px;font-weight:bold;color:#f0f0f0;">Warstwy</div>
<div class="t" style="left:1027.60px;top:394.00px;font-size:8.7px;line-height:11px;letter-spacing:-0.654px;font-weight:bold;color:#a9a9a9;">Kanały</div>
<div class="t" style="left:1070.70px;top:394.00px;font-size:8.7px;line-height:11px;letter-spacing:-0.457px;font-weight:bold;color:#a9a9a9;">Ścieżki</div>
<svg style="left:1265px;top:394.8px;" width="9" height="7" viewBox="0 0 9 7"><path d="M0 .6h8.600M0 2.800h8.600" stroke="#b4b4b4" stroke-width="1"/><path d="M0 5.400h8.600" stroke="#b4b4b4" stroke-width="1.800"/></svg>
<div class="a" style="left:1062px;top:390.5px;width:1px;height:16px;background:#4a4a4a;"></div>
<div class="a" style="left:973.2px;top:418.1px;width:91px;height:13.8px;background:#424242;border-radius:1px"></div>
<svg style="left:978.8px;top:420.3px;" width="9" height="9" viewBox="0 0 9 9"><circle cx="3.400" cy="3.400" r="2.700" fill="none" stroke="#dedede" stroke-width="1.100"/><path d="M5.400 5.400L8 8" stroke="#dedede" stroke-width="1.400" stroke-linecap="round"/></svg>
<div class="t" style="left:990.70px;top:419.00px;font-size:9px;line-height:12px;letter-spacing:-0.620px;color:#e6e6e6;">Rodzaj</div>
<svg style="left:1057px;top:425px;" width="6" height="4" viewBox="0 0 6 4"><path d="M.3.400L2.700 2.800L5.100.400" fill="none" stroke="#c4c4c4" stroke-width="1"/></svg>
<div class="a" style="left:969.7px;top:435.3px;width:308.29999999999995px;height:1px;background:#484848;"></div>
<div class="a" style="left:973.2px;top:442.2px;width:170.6px;height:13.4px;background:#424242;border-radius:1px"></div>
<div class="t" style="left:979.60px;top:442.00px;font-size:9px;line-height:12px;letter-spacing:-0.402px;color:#e6e6e6;">Normalnie</div>
<svg style="left:1136px;top:448px;" width="6" height="4" viewBox="0 0 6 4"><path d="M.3.400L2.700 2.800L5.100.400" fill="none" stroke="#c4c4c4" stroke-width="1"/></svg>
<div class="t" style="left:1150.70px;top:442.00px;font-size:9px;line-height:12px;letter-spacing:-0.401px;color:#d8d8d8;">Krycie:</div>
<div class="a" style="left:1180px;top:442.2px;width:28px;height:13.4px;background:#424242;"></div>
<div class="t" style="left:1182.50px;top:442.00px;font-size:9px;line-height:12px;letter-spacing:-0.430px;color:#ececec;">100%</div>
<div class="a" style="left:1209.1px;top:442.2px;width:11.4px;height:13.4px;background:#424242;"></div>
<svg style="left:1212px;top:448.4px;" width="6" height="4" viewBox="0 0 6 4"><path d="M.3.400L2.700 2.800L5.100.400" fill="none" stroke="#c4c4c4" stroke-width="1"/></svg>
<div class="a" style="left:969.7px;top:458px;width:308.29999999999995px;height:1px;background:#484848;"></div>
<div class="t" style="left:974.70px;top:466.00px;font-size:9px;line-height:12px;letter-spacing:-0.214px;color:#d0d0d0;">Zablokuj:</div>
<div class="t" style="left:1127.90px;top:465.00px;font-size:9px;line-height:12px;letter-spacing:-0.329px;color:#d8d8d8;">Wypełnienie:</div>
<div class="a" style="left:1180px;top:464.8px;width:28px;height:12.4px;background:#424242;"></div>
<div class="t" style="left:1182.50px;top:465.00px;font-size:9px;line-height:12px;letter-spacing:-0.430px;color:#ececec;">100%</div>
<div class="a" style="left:1209.1px;top:464.8px;width:11.4px;height:12.4px;background:#424242;"></div>
<svg style="left:1212px;top:471px;" width="6" height="4" viewBox="0 0 6 4"><path d="M.3.400L2.700 2.800L5.100.400" fill="none" stroke="#c4c4c4" stroke-width="1"/></svg>
<div class="a" style="left:969.7px;top:483.5px;width:308.29999999999995px;height:179.5px;background:#4d4d4d;"></div>
<div class="a" style="left:969.7px;top:483.5px;width:295.5px;height:0.8px;background:#474747;"></div>
<div class="a" style="left:969.7px;top:484px;width:24.5px;height:33.3px;background:#565656;"></div>
<div class="a" style="left:994.5px;top:484px;width:270.5px;height:33.3px;background:#696969;"></div>
<div class="a" style="left:969.7px;top:518px;width:295.5px;height:34px;background:#535353;"></div>
<div class="a" style="left:969.7px;top:517.3px;width:295.5px;height:0.9px;background:#454545;"></div>
<div class="a" style="left:969.7px;top:552px;width:295.5px;height:0.9px;background:#474747;"></div>
<div class="a" style="left:994px;top:484px;width:0.8px;height:68px;background:#474747;"></div>
<div class="a" style="left:996.3px;top:486.1px;width:30px;height:30.3px;background:#3a3a3a;"></div>
<div class="a" style="left:998.3px;top:488.8px;width:25.4px;height:25px;background:#19baf3;"></div>
<div class="a" style="left:997.7px;top:522.2px;width:26.5px;height:26.8px;background:#3c3c3c;"></div>
<div class="a" style="left:998.5px;top:523px;width:24.9px;height:25.3px;background:#ffffff;"></div>
<div class="t" style="left:1032.60px;top:496.00px;font-size:9px;line-height:12px;word-spacing:0.654px;letter-spacing:-0.481px;color:#ececec;">Warstwa 1</div>
<div class="t" style="left:1033.50px;top:529.00px;font-size:9px;line-height:12px;letter-spacing:-0.335px;font-style:italic;color:#e4e4e4;">Tło</div>
<div class="a" style="left:969.7px;top:663px;width:308.29999999999995px;height:22px;background:#535353;"></div>
<div class="a" style="left:969.7px;top:662.5px;width:308.29999999999995px;height:0.8px;background:#474747;"></div>
<svg style="left:0;top:0" width="1280" height="687" viewBox="0 0 1280 687"><rect x="1095.300" y="420.800" width="9.600" height="7.500" fill="none" stroke="#dedede" stroke-width="1.100"/><path d="M1096.600 427.200l2-2.800l1.400 1.600l1-1.100l2.300 2.300z" fill="#dedede"/><circle cx="1119.500" cy="424.500" r="4" fill="none" stroke="#dedede" stroke-width="1.100"/><path d="M1116.600 427.400a4 4 0 005.700-5.700z" fill="#dedede"/><path d="M1136 420.600h7.800v2.300h-.8l-.4-1.300h-1.900v5.800l1.200.3v.8h-4v-.8l1.200-.3v-5.800h-1.900l-.4 1.300h-.8z" fill="#dedede"/><rect x="1156.600" y="422" width="6.800" height="5.200" fill="none" stroke="#dedede" stroke-width="1.100"/><rect x="1155.3" y="420.7" width="2.600" height="2.600" fill="#dedede"/><rect x="1162.1000000000001" y="420.7" width="2.600" height="2.600" fill="#dedede"/><rect x="1155.3" y="425.9" width="2.600" height="2.600" fill="#dedede"/><rect x="1162.1000000000001" y="425.9" width="2.600" height="2.600" fill="#dedede"/><path d="M1178.600 420.600h3.800l2.400 2.400v5.800h-4" fill="none" stroke="#dedede" stroke-width="1.100"/><path d="M1182.400 420.600v2.400h2.400" fill="none" stroke="#dedede" stroke-width=".9"/><rect x="1176.400" y="424" width="5.200" height="5" fill="#dedede"/><rect x="1178" y="425.600" width="2" height="1.800" fill="#666"/><rect x="1214" y="419" width="6.600" height="12.400" rx="3.300" fill="#454545"/><circle cx="1217.300" cy="420.700" r="3.500" fill="#e4e4e4"/><rect x="1016.700" y="466.600" width="9.400" height="9.200" fill="#e0e0e0"/><rect x="1020.05" y="467.10" width="2.700" height="2.700" fill="#4a4a4a"/><rect x="1017.30" y="469.85" width="2.700" height="2.700" fill="#4a4a4a"/><rect x="1022.80" y="469.85" width="2.700" height="2.700" fill="#4a4a4a"/><rect x="1020.05" y="472.60" width="2.700" height="2.700" fill="#4a4a4a"/><path d="M1046.200 465.300L1039.700 471.400L1041.700 473.400Z" fill="#dedede" stroke="#dedede" stroke-width=".5" stroke-linejoin="round"/><path d="M1039.400 472.200l1.700 1.700c.3 1-.3 1.700-1.200 2c-1.300.500-2.700.400-4.100.100c1.300-.600 1.100-1.500 1.600-2.400c.5-.800 1.200-1.400 2-1.400z" fill="#dedede"/><path d="M1057.700 466.600v9.400M1053 471.300h9.400" stroke="#dedede" stroke-width="1.100" fill="none"/><path d="M1057.700 465.700l1.900 2.300h-3.800zM1057.700 476.900l1.900-2.300h-3.800zM1052.100 471.300l2.300-1.900v3.800zM1063.300 471.300l-2.300-1.900v3.800z" fill="#dedede"/><path d="M1073 465.800v8.200h9.200M1070.600 468.200h9.200v8" fill="none" stroke="#dedede" stroke-width="1.100"/><path d="M1075.400 466l5.800 0.200l.2 5.600" fill="none" stroke="#dedede" stroke-width=".8" stroke-dasharray="1.200 1"/><path d="M1092.4 470.2v-1.600a2.400 2.400 0 014.800 0v1.600" fill="none" stroke="#dedede" stroke-width="1.300"/><rect x="1090.4" y="470" width="8.800" height="5.800" rx=".6" fill="#dedede"/><rect x="1094.0" y="471.8" width="1.600" height="2" fill="#555"/><path d="M976.3000000000001 501.5c2.400-4.300 8.400-4.300 10.800 0c-2.400 4.300-8.400 4.300-10.800 0z" fill="#ececec"/><circle cx="981.7" cy="501.5" r="2.300" fill="#555"/><circle cx="981.7" cy="501.5" r="1.100" fill="#ececec"/><path d="M976.3000000000001 535.4c2.400-4.300 8.400-4.300 10.800 0c-2.400 4.300-8.400 4.300-10.800 0z" fill="#ececec"/><circle cx="981.7" cy="535.4" r="2.300" fill="#555"/><circle cx="981.7" cy="535.4" r="1.100" fill="#ececec"/><path d="M996.800 496v-9.400h9.400M1016.200 486.600h9.600v9.400M1025.800 506.400v9.500h-9.600M1006.200 515.900h-9.400v-9.500" fill="none" stroke="#dcdcdc" stroke-width="1"/><g transform="translate(1010.900 502) scale(0.088) translate(-500 -383.6)"><defs><radialGradient id="mh" cx=".45" cy=".4" r=".7"><stop offset="0" stop-color="#ffe135"/><stop offset=".8" stop-color="#fbd622"/><stop offset="1" stop-color="#e9bd0c"/></radialGradient><filter id="mf" x="-20%" y="-20%" width="140%" height="140%"><feGaussianBlur stdDeviation="2.2"/></filter></defs><path d="M480.70 348.03A25 25 0 1 1 526.49 353.00A21.7 21.7 0 0 0 540.46 384.67A25 25 0 1 1 513.25 421.84A21.7 21.7 0 0 0 478.85 418.10A25 25 0 1 1 460.26 375.96A21.7 21.7 0 0 0 480.70 348.03Z" fill="#0a6fa0" opacity=".45" opacity="0" transform="translate(-1.5 2.5)"/><path d="M480.70 348.03A25 25 0 1 1 526.49 353.00A21.7 21.7 0 0 0 540.46 384.67A25 25 0 1 1 513.25 421.84A21.7 21.7 0 0 0 478.85 418.10A25 25 0 1 1 460.26 375.96A21.7 21.7 0 0 0 480.70 348.03Z" fill="#f7cf14" stroke="#d9a90a" stroke-width="1.2"/><circle cx="504.64" cy="340.85" r="17.6" fill="#17161b"/><circle cx="504.64" cy="340.85" r="14" fill="none" stroke="#2b2a30" stroke-width="1.5"/><circle cx="504.64" cy="340.85" r="9.2" fill="#0b0b0e"/><circle cx="504.94" cy="340.55" r="8.1" fill="#16b4ec"/><circle cx="534.70" cy="409.00" r="17.6" fill="#17161b"/><circle cx="534.70" cy="409.00" r="14" fill="none" stroke="#2b2a30" stroke-width="1.5"/><circle cx="534.70" cy="409.00" r="9.2" fill="#0b0b0e"/><circle cx="535.00" cy="408.70" r="8.1" fill="#16b4ec"/><circle cx="460.66" cy="400.95" r="17.6" fill="#17161b"/><circle cx="460.66" cy="400.95" r="14" fill="none" stroke="#2b2a30" stroke-width="1.5"/><circle cx="460.66" cy="400.95" r="9.2" fill="#0b0b0e"/><circle cx="460.96" cy="400.65" r="8.1" fill="#16b4ec"/><circle cx="500.0" cy="383.6" r="18.3" fill="#e3b408"/><circle cx="500.0" cy="383.20000000000005" r="17.4" fill="url(#mh)"/></g><path d="M1245.900 534.200v-1.400a2.100 2.100 0 014.200 0v1.400" fill="none" stroke="#d0d0d0" stroke-width="1.100"/><rect x="1244.500" y="534.200" width="7" height="5.600" fill="none" stroke="#d0d0d0" stroke-width="1.100"/><rect x="1247.200" y="536.100" width="1.600" height="1.800" fill="#d0d0d0"/><path d="M1114.200 672.600h-2.200a2.500 2.500 0 000 5h2.200M1116.600 672.600h2.200a2.500 2.500 0 010 5h-2.200M1112.400 675.100h6" fill="none" stroke="#8c8c8c" stroke-width="1.100"/><rect x="1154.800" y="670.800" width="10.800" height="8" fill="#dedede"/><circle cx="1160.200" cy="674.800" r="2.500" fill="#4a4a4a"/><circle cx="1183" cy="674.800" r="4.300" fill="none" stroke="#dedede" stroke-width="1.100"/><path d="M1179.900 677.900a4.300 4.300 0 006.200-6.200z" fill="#dedede"/><path d="M1190.600 679v1.600h-1.600z" fill="#dedede"/><path d="M1200.400 670.800h4l1.200 1.400h5.200v6.800h-10.400z" fill="#dedede"/><path d="M1223.200 670.600h9.200v9h-5.600l-3.600-3.600z" fill="none" stroke="#dedede" stroke-width="1.200"/><path d="M1223.200 676h3.600v3.600" fill="none" stroke="#dedede" stroke-width="1"/><path d="M1245.400 672.600h9.200M1248.400 672.200v-1.400h3.200v1.400" fill="none" stroke="#dedede" stroke-width="1.100"/><path d="M1246.400 673.800h7.200l-.6 6.400h-6z" fill="#dedede"/><path d="M1248.600 675v4M1250 675v4M1251.400 675v4" stroke="#555" stroke-width=".7"/></svg>
<div class="t" style="left:1134.30px;top:668.00px;font-size:11.5px;line-height:15px;letter-spacing:-0.173px;font-style:italic;color:#e0e0e0;">fx</div>
<div class="a" style="left:1144.2px;top:679.4px;width:1.5px;height:1.5px;background:#d0d0d0;"></div>
<!-- p99_tail -->
</div>
</body>
</html>
